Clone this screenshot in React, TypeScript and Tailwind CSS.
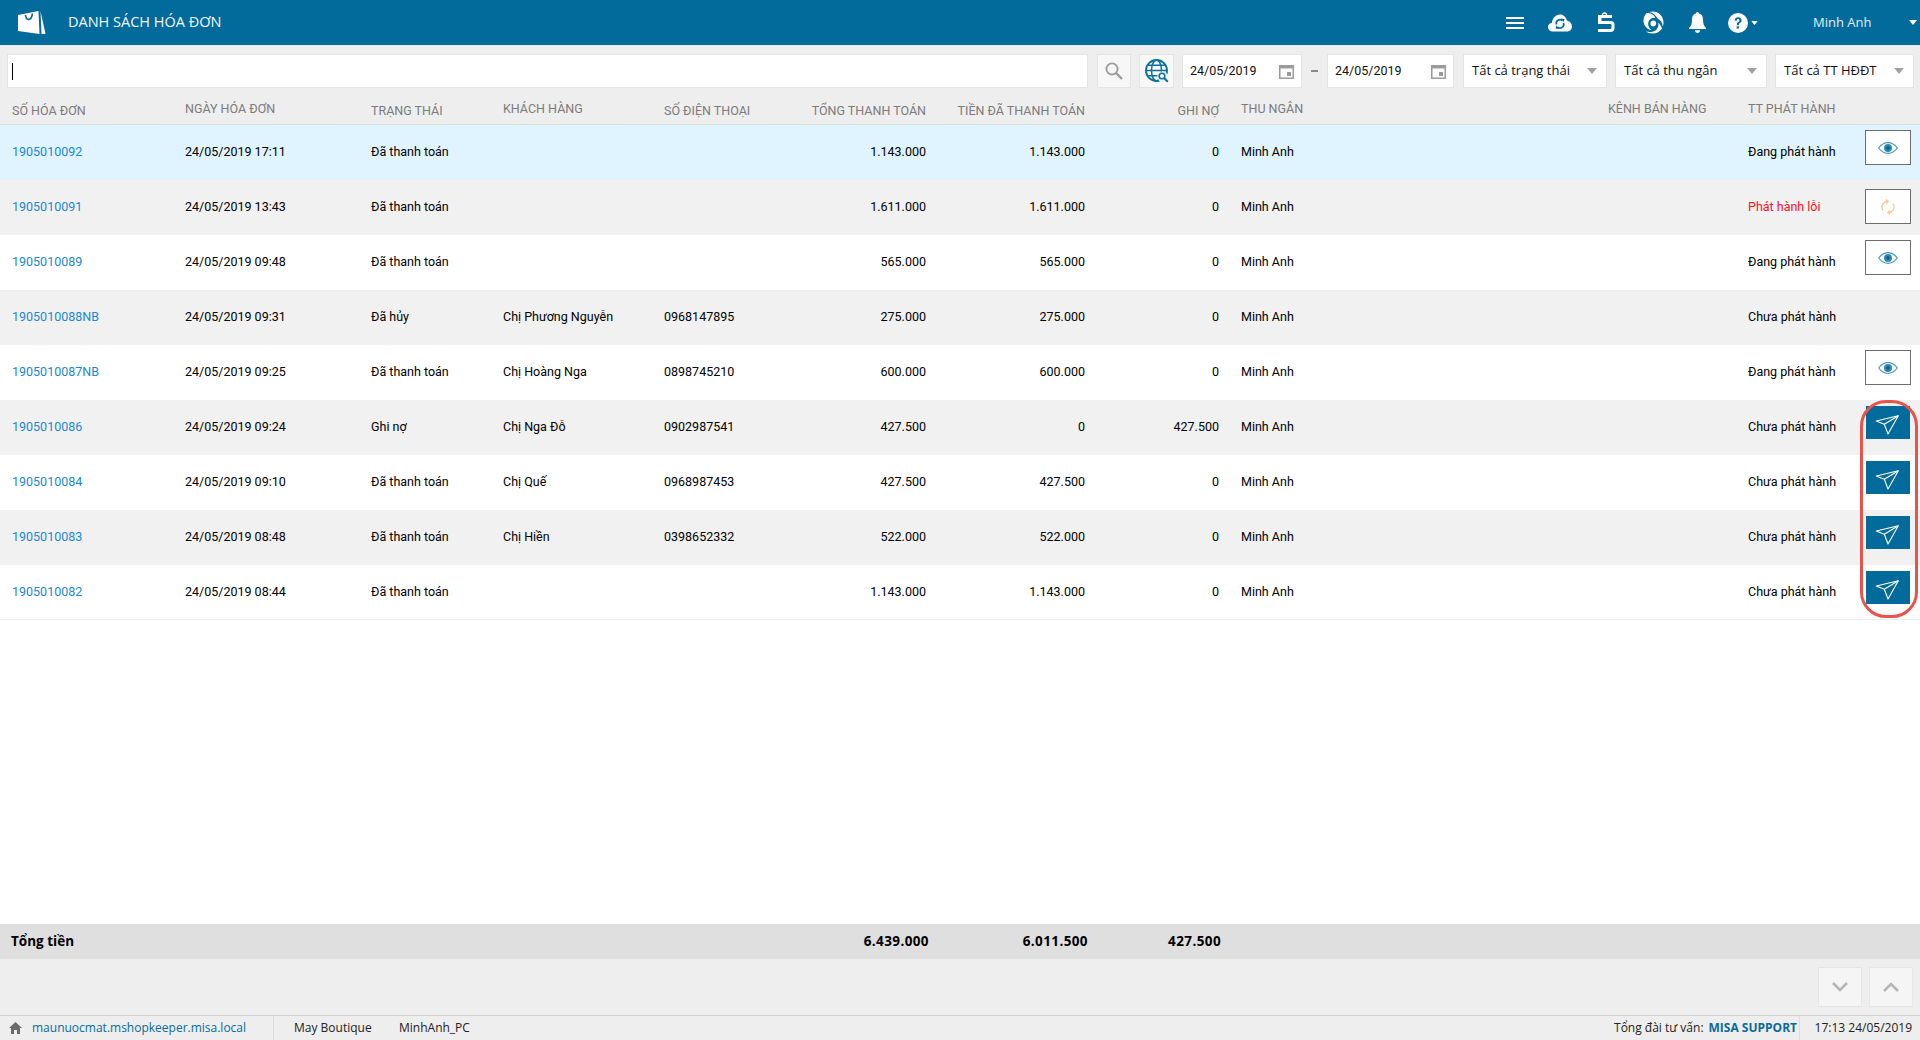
import React from "react";

const cols = "grid grid-cols-[185px_186px_132px_161px_116px_146px_159px_134px_22px_367px_140px_118px_54px]";

type Row = {
  id: string; date: string; st: string; kh: string; sdt: string; tt: string; paid: string; no: string; ph: string; btn: "eye" | "sync" | "send" | "none";
};
const rows: Row[] = [
  { id: "1905010092", date: "24/05/2019 17:11", st: "Đã thanh toán", kh: "", sdt: "", tt: "1.143.000", paid: "1.143.000", no: "0", ph: "Đang phát hành", btn: "eye" },
  { id: "1905010091", date: "24/05/2019 13:43", st: "Đã thanh toán", kh: "", sdt: "", tt: "1.611.000", paid: "1.611.000", no: "0", ph: "Phát hành lỗi", btn: "sync" },
  { id: "1905010089", date: "24/05/2019 09:48", st: "Đã thanh toán", kh: "", sdt: "", tt: "565.000", paid: "565.000", no: "0", ph: "Đang phát hành", btn: "eye" },
  { id: "1905010088NB", date: "24/05/2019 09:31", st: "Đã hủy", kh: "Chị Phương Nguyễn", sdt: "0968147895", tt: "275.000", paid: "275.000", no: "0", ph: "Chưa phát hành", btn: "none" },
  { id: "1905010087NB", date: "24/05/2019 09:25", st: "Đã thanh toán", kh: "Chị Hoàng Nga", sdt: "0898745210", tt: "600.000", paid: "600.000", no: "0", ph: "Đang phát hành", btn: "eye" },
  { id: "1905010086", date: "24/05/2019 09:24", st: "Ghi nợ", kh: "Chị Nga Đỗ", sdt: "0902987541", tt: "427.500", paid: "0", no: "427.500", ph: "Chưa phát hành", btn: "send" },
  { id: "1905010084", date: "24/05/2019 09:10", st: "Đã thanh toán", kh: "Chị Quế", sdt: "0968987453", tt: "427.500", paid: "427.500", no: "0", ph: "Chưa phát hành", btn: "send" },
  { id: "1905010083", date: "24/05/2019 08:48", st: "Đã thanh toán", kh: "Chị Hiền", sdt: "0398652332", tt: "522.000", paid: "522.000", no: "0", ph: "Chưa phát hành", btn: "send" },
  { id: "1905010082", date: "24/05/2019 08:44", st: "Đã thanh toán", kh: "", sdt: "", tt: "1.143.000", paid: "1.143.000", no: "0", ph: "Chưa phát hành", btn: "send" },
];

function Logo() {
  return (
    <svg width="30" height="26" viewBox="0 0 30 26">
      <path d="M1 5 L21.5 1 L22.5 24 L1 21 Z" fill="#fff" />
      <path d="M23.5 1 L28.5 24 L24.5 24 Z" fill="#fff" />
      <path d="M8.5 5 C9 11 14 11.5 15.5 3.5" fill="none" stroke="#026b9b" strokeWidth="1.6" />
    </svg>
  );
}
function Burger() {
  return (
    <svg width="18" height="12" viewBox="0 0 18 12" fill="#fff">
      <rect width="18" height="2" /><rect y="5" width="18" height="2" /><rect y="10" width="18" height="2" />
    </svg>
  );
}
function CloudSync() {
  return (
    <svg width="24" height="18" viewBox="0 0 24 18">
      <path d="M5 17.5 C1.5 17.5 0 15 0 13 C0 10.5 2 9 3.8 9 C4.5 4 8 .5 12 .5 C15.5 .5 18 3 18.8 6.5 C21.5 7 24 9.5 24 12.5 C24 15.5 21.5 17.5 19 17.5 Z" fill="#fff" />
      <path d="M8.5 10.5 A3.7 3.7 0 0 1 14.5 6.6 M15.5 9 A3.7 3.7 0 0 1 9.5 13" fill="none" stroke="#026b9b" strokeWidth="1.7" />
      <path d="M13 4.5 L16.5 5 L15.5 8.3 Z M11 15 L7.5 14.5 L8.5 11.2 Z" fill="#026b9b" />
    </svg>
  );
}
function Clip5() {
  return (
    <svg width="18" height="21" viewBox="0 0 18 21">
      <path d="M5.5 3 C5.5 .3 9.5 .3 9.5 3" fill="none" stroke="#fff" strokeWidth="1.4" />
      <path d="M1 3 H15 V6 H4.5 V9 H13.5 C16 9 17.5 10.5 17.5 12.5 V16 C17.5 18.5 16 20 13.5 20 H1 V17 H13 C14 17 14.5 16.5 14.5 15.5 V13 C14.5 12.3 14 12 13 12 H1 Z" fill="#fff" />
    </svg>
  );
}
function Swirl() {
  return (
    <svg width="23" height="23" viewBox="0 0 24 24" fill="#fff">
      <path d="M12 .5 C18.5 .5 23.5 5.5 23.5 12 C23.5 13.5 23.2 15 22.6 16.3 C22.5 12 20.5 9.2 17.5 8 C15.5 4.5 13 2 9 1 C10 .7 11 .5 12 .5 Z" />
      <path d="M6 2.2 C10 1.8 13.5 4 15 7 C12 6.8 9.2 8 8 10.6 C6.7 13.5 7.6 17 10.8 19.8 C6.2 19 2.5 15 2.6 9.8 C2.7 6.7 4 4 6 2.2 Z" />
      <path d="M22 18 C20 21.5 16.2 23.5 12 23.5 C9.5 23.5 7 22.7 5 21.2 C9 22.5 13 22 15.5 20 C17.8 18 18.6 15.3 18 12 C19.8 13.8 21 15.8 22 18 Z" />
      <path d="M9.8 13 C9.8 10.7 12 9.5 13.8 10 C15.7 10.6 16.4 12.8 15.4 14.6 C14.4 16.2 12.4 16.5 11 15.6 C10.2 15 9.8 14 9.8 13 Z" />
    </svg>
  );
}
function Bell() {
  return (
    <svg width="17" height="21" viewBox="0 0 17 21" fill="#fff">
      <path d="M8.5 0 C9.5 0 10 .6 10 1.6 C12.8 2.3 14 4.5 14 7.5 C14 12 15 14.3 17 16 V17 H0 V16 C2 14.3 3 12 3 7.5 C3 4.5 4.2 2.3 7 1.6 C7 .6 7.5 0 8.5 0 Z" />
      <path d="M6 18.2 H11 C11 20 9.8 21 8.5 21 C7.2 21 6 20 6 18.2 Z" />
    </svg>
  );
}
function Help() {
  return (
    <svg width="20" height="20" viewBox="0 0 20 20">
      <circle cx="10" cy="10" r="10" fill="#fff" />
      <path d="M6.6 7.6 C6.8 5.2 8.4 4.2 10.2 4.2 C12.2 4.2 13.6 5.5 13.6 7.2 C13.6 8.6 12.9 9.3 11.8 10 C11 10.5 10.8 11 10.8 12.2 H8.8 C8.8 10.6 9.2 9.7 10.3 9 C11.2 8.4 11.4 8 11.4 7.3 C11.4 6.6 10.9 6.1 10.1 6.1 C9.3 6.1 8.8 6.7 8.7 7.8 Z" fill="#026b9b" />
      <rect x="8.7" y="13.3" width="2.2" height="2.3" fill="#026b9b" />
    </svg>
  );
}
function Caret({ c = "#fff", w = 8, h = 5 }: { c?: string; w?: number; h?: number }) {
  return (
    <svg width={w} height={h} viewBox="0 0 8 5"><path d="M0 0 H8 L4 5 Z" fill={c} /></svg>
  );
}
function SearchI() {
  return (
    <svg width="18" height="18" viewBox="0 0 18 18" fill="none" stroke="#9b9b9b">
      <circle cx="7" cy="7" r="5.6" strokeWidth="1.8" />
      <path d="M11 11 L17 17" strokeWidth="2.4" />
    </svg>
  );
}
function Globe() {
  return (
    <svg width="24" height="24" viewBox="0 0 24 24" fill="none" stroke="#0d6f9d" strokeWidth="1.5">
      <circle cx="11.5" cy="11.5" r="10.5" strokeWidth="1.9" />
      <ellipse cx="11.5" cy="11.5" rx="5" ry="10.5" />
      <path d="M1 11.5 H22 M2.6 6.2 H20.4 M2.6 16.8 H20.4" />
      <circle cx="17.5" cy="17.5" r="5.2" fill="#eeeeee" stroke="none" />
      <circle cx="17" cy="17" r="2.8" fill="#fff" strokeWidth="1.6" />
      <path d="M19 19 L22.8 22.8" strokeWidth="2" />
    </svg>
  );
}
function Cal() {
  return (
    <svg width="15" height="15" viewBox="0 0 15 15">
      <path d="M0 1 H15 V15 H0 Z M1.5 4.5 V13.5 H13.5 V4.5 Z" fill="#9a9a9a" fillRule="evenodd" />
      <rect x="8" y="8" width="4" height="4" fill="#9a9a9a" />
    </svg>
  );
}
function Eye() {
  return (
    <svg width="20" height="12" viewBox="0 0 20 12">
      <path d="M.7 6 C3.5 2.2 6.5 .7 10 .7 C13.5 .7 16.5 2.2 19.3 6 C16.5 9.8 13.5 11.3 10 11.3 C6.5 11.3 3.5 9.8 .7 6 Z" fill="none" stroke="#4a9cc2" strokeWidth="1.2" />
      <circle cx="10" cy="6" r="4" fill="#2d88b3" />
      <circle cx="10" cy="6" r="1.7" fill="#0d5f88" />
    </svg>
  );
}
function Sync() {
  return (
    <svg width="14" height="16" viewBox="0 0 14 16" fill="none" stroke="#fcc58f" strokeWidth="1.2">
      <path d="M2.2 11.5 A5.7 5.7 0 0 1 6.5 2.3" />
      <path d="M11.8 4.5 A5.7 5.7 0 0 1 7.5 13.7" />
      <path d="M4.8 .6 L7.2 2.4 L5.2 4.6 M9.2 15.4 L6.8 13.6 L8.8 11.4" />
    </svg>
  );
}
function Plane() {
  return (
    <svg width="44" height="33" viewBox="0 0 44 33" fill="none" stroke="#fff" strokeWidth="1.1" strokeLinejoin="round">
      <path d="M10.3 15 L32.3 9.7 L22 28 L18.3 18.3 Z" />
      <path d="M32.3 9.7 L18.3 18.3" />
    </svg>
  );
}
function Home() {
  return (
    <svg width="13" height="12" viewBox="0 0 13 12" fill="#6b6b6b">
      <path d="M6.5 0 L13 6 H11 V12 H8 V8 H5 V12 H2 V6 H0 Z" />
    </svg>
  );
}

function ActionBtn({ kind }: { kind: Row["btn"] }) {
  if (kind === "none") return null;
  if (kind === "send") {
    return <div className="mt-[6px] flex h-[33px] w-[44px] items-center justify-center bg-[#026b9b]"><Plane /></div>;
  }
  const top = kind === "sync" ? "mt-[9px]" : "mt-[5px]";
  return (
    <div className={`${top} -ml-[1px] flex h-[35px] w-[46px] items-center justify-center border border-[#6e6e6e] bg-white`}>
      {kind === "eye" ? <Eye /> : <Sync />}
    </div>
  );
}

function Head({ children, cls = "", low = false }: { children?: React.ReactNode; cls?: string; low?: boolean }) {
  return <div className={`${low ? "pt-[14px]" : "pt-[12px]"} ${cls} whitespace-nowrap`}>{children}</div>;
}

function Select({ label, w }: { label: string; w: string }) {
  return (
    <div className={`${w} flex h-[34px] items-center justify-between border border-[#e4e4e4] bg-white pl-[8px] pr-[9px] font-['Open_Sans'] text-[13px] text-[#111]`}>
      <span className="whitespace-nowrap">{label}</span>
      <Caret c="#a0a0a0" w={10} h={6} />
    </div>
  );
}

function DateBox({ w, v }: { w: string; v: string }) {
  return (
    <div className={`${w} flex h-[34px] items-center justify-between border border-[#e4e4e4] bg-white pl-[7px] pr-[7px] text-[12.5px] text-[#111]`}>
      <span>{v}</span>
      <Cal />
    </div>
  );
}

export default function App() {
  return (
    <div className="relative flex h-[1040px] w-[1920px] flex-col overflow-hidden bg-white font-['Roboto'] text-black">
      <header className="flex h-[45px] shrink-0 items-center bg-[#026b9b] text-white">
        <div className="ml-[17px] flex h-[26px] w-[30px] items-center"><Logo /></div>
        <div className="ml-[21px] font-['Open_Sans'] text-[14.5px] leading-none text-[#f2f7fa]">DANH SÁCH HÓA ĐƠN</div>
        <div className="ml-auto flex items-center">
          <Burger />
          <div className="ml-[24px]"><CloudSync /></div>
          <div className="ml-[25px]"><Clip5 /></div>
          <div className="ml-[26px]"><Swirl /></div>
          <div className="ml-[25px]"><Bell /></div>
          <div className="ml-[22px]"><Help /></div>
          <div className="ml-[3px] mt-[1px]"><Caret w={7} h={4} /></div>
          <div className="ml-[55px] w-[96px] font-['Open_Sans'] text-[13px] text-[#e4eef3]">Minh Anh</div>
          <div className="mr-[3px]"><Caret w={8} h={5} /></div>
        </div>
      </header>

      <div className="flex h-[43px] shrink-0 items-end bg-[#eeeeee] pl-[7px]">
        <div className="flex h-[34px] w-[1081px] items-center border border-[#e4e4e4] bg-white pl-[4px]">
          <div className="h-[17px] w-[1px] bg-black" />
        </div>
        <div className="ml-[9px] flex h-[34px] w-[34px] items-center justify-center border border-[#e4e4e4] bg-[#f7f7f7]"><SearchI /></div>
        <div className="ml-[8px] flex h-[34px] w-[35px] items-center justify-center border border-[#e4e4e4] bg-[#f7f7f7]"><Globe /></div>
        <div className="ml-[8px]"><DateBox w="w-[120px]" v="24/05/2019" /></div>
        <div className="flex h-[34px] w-[25px] items-center justify-center"><div className="h-[2px] w-[7px] bg-[#8a8a8a]" /></div>
        <DateBox w="w-[127px]" v="24/05/2019" />
        <div className="ml-[9px]"><Select label="Tất cả trạng thái" w="w-[144px]" /></div>
        <div className="ml-[8px]"><Select label="Tất cả thu ngân" w="w-[152px]" /></div>
        <div className="ml-[8px]"><Select label="Tất cả TT HĐĐT" w="w-[139px]" /></div>
      </div>

      <div className={`${cols} h-[37px] shrink-0 border-b border-[#dcdcdc] bg-[#eeeeee] text-[12.5px] text-[#7b7b7b]`}>
        <Head low cls="pl-[12px]">SỐ HÓA ĐƠN</Head>
        <Head>NGÀY HÓA ĐƠN</Head>
        <Head low>TRẠNG THÁI</Head>
        <Head>KHÁCH HÀNG</Head>
        <Head low>SỐ ĐIỆN THOẠI</Head>
        <Head low cls="text-right">TỔNG THANH TOÁN</Head>
        <Head low cls="text-right">TIỀN ĐÃ THANH TOÁN</Head>
        <Head low cls="text-right">GHI NỢ</Head>
        <div />
        <Head>THU NGÂN</Head>
        <Head>KÊNH BÁN HÀNG</Head>
        <Head>TT PHÁT HÀNH</Head>
        <div />
      </div>

      <div className="min-h-0 flex-1">
        {rows.map((r, i) => (
          <div
            key={r.id}
            className={`${cols} h-[55px] text-[12.5px] ${i === 0 ? "bg-[#e0f4ff]" : i % 2 === 1 ? "bg-[#f1f1f1]" : "bg-white"} ${i === rows.length - 1 ? "border-b border-[#ececec]" : ""}`}
          >
            <div className="flex items-center pl-[12px] text-[#1a88d0]">{r.id}</div>
            <div className="flex items-center">{r.date}</div>
            <div className="flex items-center">{r.st}</div>
            <div className="flex items-center whitespace-nowrap">{r.kh}</div>
            <div className="flex items-center">{r.sdt}</div>
            <div className="flex items-center justify-end">{r.tt}</div>
            <div className="flex items-center justify-end">{r.paid}</div>
            <div className="flex items-center justify-end">{r.no}</div>
            <div />
            <div className="flex items-center">Minh Anh</div>
            <div />
            <div className={`flex items-center whitespace-nowrap ${r.ph === "Phát hành lỗi" ? "text-[#ff0f1f]" : ""}`}>{r.ph}</div>
            <div><ActionBtn kind={r.btn} /></div>
          </div>
        ))}
      </div>

      <div className={`${cols} h-[35px] shrink-0 items-center bg-[#dfdfdf] font-['Open_Sans'] text-[13.5px] font-bold text-black`}>
        <div className="pl-[11px]">Tổng tiền</div>
        <div /><div /><div /><div />
        <div className="pr-0 text-right tracking-[0.4px] [margin-right:-3px]">6.439.000</div>
        <div className="text-right tracking-[0.4px] [margin-right:-3px]">6.011.500</div>
        <div className="text-right tracking-[0.4px] [margin-right:-2px]">427.500</div>
      </div>

      <div className="flex h-[56px] shrink-0 items-start justify-end bg-[#eeeeee] pt-[8px] pr-[7px]">
        <div className="flex h-[40px] w-[44px] items-center justify-center border border-[#e6e6e6] bg-[#f5f5f5]">
          <svg width="16" height="10" viewBox="0 0 16 10" fill="none" stroke="#b5b5b5" strokeWidth="2.6"><path d="M1 1 L8 8 L15 1" /></svg>
        </div>
        <div className="ml-[7px] flex h-[40px] w-[44px] items-center justify-center border border-[#e6e6e6] bg-[#f5f5f5]">
          <svg width="16" height="10" viewBox="0 0 16 10" fill="none" stroke="#b5b5b5" strokeWidth="2.6"><path d="M1 9 L8 2 L15 9" /></svg>
        </div>
      </div>

      <footer className="flex h-[25px] shrink-0 items-center border-t border-[#d2d2d2] bg-[#eeeeee] font-['Open_Sans'] text-[12px] text-[#222]">
        <div className="flex h-full w-[274px] items-center border-r border-[#dddddd] pl-[9px]">
          <Home />
          <span className="ml-[10px] whitespace-nowrap text-[#0a6a97]">maunuocmat.mshopkeeper.misa.local</span>
        </div>
        <span className="ml-[20px] w-[105px]">May Boutique</span>
        <span>MinhAnh_PC</span>
        <span className="ml-auto">Tổng đài tư vấn:</span>
        <span className="ml-[5px] font-bold text-[#0a6a97]">MISA SUPPORT</span>
        <div className="ml-[2px] flex h-full w-[121px] items-center justify-end border-l border-[#dddddd] pr-[8px]">17:13 24/05/2019</div>
      </footer>

      <div className="absolute left-[1860px] top-[400px] h-[218px] w-[58px] rounded-[26px] border-[3px] border-[#e8534b]" />
    </div>
  );
}
